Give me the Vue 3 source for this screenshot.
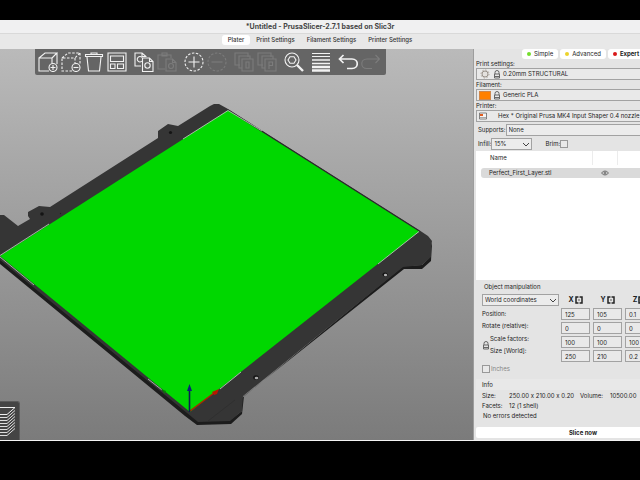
<script setup>
import { ref } from 'vue'

const tabs = ['Plater', 'Print Settings', 'Filament Settings', 'Printer Settings']
const activeTab = ref('Plater')

const modes = [
  { name: 'Simple', tone: 'green' },
  { name: 'Advanced', tone: 'yellow' },
  { name: 'Expert', tone: 'red' },
]
const mode = ref('Expert')

const toolGroups = [
  [{ id: 'add', label: 'Add' }, { id: 'remove', label: 'Delete' }, { id: 'trash', label: 'Delete all' }, { id: 'arrange', label: 'Arrange' }],
  [{ id: 'copy', label: 'Copy' }, { id: 'paste', label: 'Paste', off: true }],
  [{ id: 'plus', label: 'Add instance' }, { id: 'minus', label: 'Remove instance', off: true }],
  [{ id: 'objects', label: 'Split to objects', off: true }, { id: 'parts', label: 'Split to parts', off: true }],
  [{ id: 'search', label: 'Search' }],
  [{ id: 'layers', label: 'Variable layer height' }],
  [{ id: 'undo', label: 'Undo' }, { id: 'redo', label: 'Redo', off: true }],
]

const axes = ['X', 'Y', 'Z']
const values = ref([
  { name: 'Position', v: ['125', '105', '0.1'] },
  { name: 'Rotate', v: ['0', '0', '0'] },
  { name: 'Scale', v: ['100', '100', '100'] },
  { name: 'Size', v: ['250', '210', '0.2'] },
])
const inches = ref(false)
const brim = ref(false)
</script>

<template>
  <div class="screen">
    <div class="window">
      <header class="titlebar">*Untitled - PrusaSlicer-2.7.1 based on Slic3r</header>
      <nav class="tabs">
        <button v-for="t in tabs" :key="t" :class="['tab', { active: t === activeTab }]" @click="activeTab = t">{{ t }}</button>
      </nav>
      <div class="body">
        <main class="canvas">
          <svg class="bed" viewBox="0 49 474 391" preserveAspectRatio="xMinYMin slice" aria-hidden="true">
            <path fill="#1c1c1c" d="M0 258 190 413 230 420 242 411V398L403 266 422 265 431 256V246L432 241V244L431 261 422 269H404L244 396 242 414 231 424 197 425 185 416 0 264Z" />
            <path fill="#353535" d="M0 215H4L18 226 30 219 28 216V212L39 206 50 207 158 138V131L168 124 178 126 210 106 214 104H219L228 109 419 230 428 236 432 241 431 245V257L422 265 403 267 243 396 242 411 230 421 198 422 0 260Z" />
            <path fill="none" stroke="#2a2a2a" stroke-width="1.4" d="M228 110 419 231" />
            <path fill="#00d700" d="M0 256 228 110.500 419 231.500 190 412Z" />
            <path fill="none" stroke="#d8e8d8" stroke-width=".7" d="M0 257 34 285M148 379 162 390M220 389 241 372M378 264 419 231.500 M228 110.500 262 131M183 139 228 110.500M0 255.500 49 224" />
            <circle cx="42" cy="214" r="1.8" fill="#141414" />
            <circle cx="170.500" cy="132.500" r="1.6" fill="#141414" />
            <circle cx="60.500" cy="213.500" r=".7" fill="#202020" />
            <ellipse cx="256" cy="377.500" rx="2.8" ry="2.2" fill="#151515" />
            <ellipse cx="256.500" cy="378" rx="1.8" ry="1.300" fill="#a8a8a8" />
            <ellipse cx="385" cy="274.500" rx="2.600" ry="2" fill="#151515" />
            <ellipse cx="385.500" cy="275" rx="1.600" ry="1.200" fill="#b8b8b8" />
            <path fill="none" stroke="#2c2c2c" stroke-width=".7" d="M208 421 235 400" />
            <path fill="none" stroke="#b41c00" stroke-width="1.300" d="M190 411 214 393" />
            <path fill="#b81800" d="M212 392 219 389 217 394 214 395Z" />
            <path fill="#0a7d08" d="M161 389 166 391 165 394Z" />
            <path fill="none" stroke="#0b2050" stroke-width="1.600" d="M189.500 412V389" />
            <path fill="#0b2078" d="M187 391 189.500 384 192 391Z" />
          </svg>
          <div class="toolbar">
            <div v-for="(g, i) in toolGroups" :key="i" class="group">
              <button v-for="t in g" :key="t.id" class="tool" :disabled="t.off" :aria-label="t.label">
                <svg viewBox="0 0 20 20" aria-hidden="true">
                  <template v-if="t.id === 'add'">
                    <path d="M11 19H1V6H14V11M1 6 7 1H19L14 6M19 1V12" />
                    <circle cx="15" cy="15.500" r="4" /><path d="M15 13V18M12.500 15.500H17.500" />
                  </template>
                  <template v-else-if="t.id === 'remove'">
                    <path class="dash" d="M11 19H1V6H14V11M1 6 7 1H19L14 6M19 1V12" />
                    <circle cx="15" cy="15.500" r="4" /><path d="M12.500 15.500H17.500" />
                  </template>
                  <template v-else-if="t.id === 'trash'">
                    <path d="M3 5 4.500 19H15.500L17 5M1.500 4.500H18.500V2.500H1.500ZM7 2.500V1H13V2.500" />
                  </template>
                  <template v-else-if="t.id === 'arrange'">
                    <path d="M1 1H19V19H1ZM3.500 4H16.500V9.500H3.500ZM3.500 12H8V16.500H3.500ZM10.500 12H16.500V16.500H10.500Z" />
                  </template>
                  <template v-else-if="t.id === 'copy'">
                    <path d="M7 14H1V1H8L12 4.500V5M8 1V4.500H12" /><path d="M8 9A2.700 2.700 0 1 1 8 5.500" />
                    <path d="M8.500 6H15.500L19 9.500V19.500H8.500Z" /><path d="M15.500 6V9.500H19" /><circle cx="13.500" cy="13.500" r="2.700" />
                  </template>
                  <template v-else-if="t.id === 'paste'">
                    <path d="M8 17H1V3H14V6M5 4V1H10V4Z" />
                    <path d="M9 7H15.500L19 10.500V19H9ZM15.500 7V10.500H19" /><circle cx="14" cy="14" r="2.500" />
                  </template>
                  <template v-else-if="t.id === 'plus' || t.id === 'minus'">
                    <circle class="dash" cx="10" cy="10" r="9" />
                    <path :d="t.id === 'plus' ? 'M10 4.500V15.500M4.500 10H15.500' : 'M4.500 10H15.500'" />
                  </template>
                  <template v-else-if="t.id === 'objects' || t.id === 'parts'">
                    <path d="M6 13H1V1H14V5M8 16H5V4H16V7M8 7H19V19H8Z" />
                    <path v-if="t.id === 'objects'" d="M12 10H15V16H12Z" />
                    <path v-else d="M12 17V10H15.500V13.500H12" />
                  </template>
                  <template v-else-if="t.id === 'search'">
                    <circle cx="8" cy="8" r="7" /><path d="M6 4.800H10L12 8 10 11.200H6L4 8Z" />
                    <path class="thick" d="M13 13 19 19" />
                  </template>
                  <template v-else-if="t.id === 'layers'">
                    <path class="w1" d="M1 1.500H19M1 4.500H19" /><path class="w2" d="M1 8H19M1 11.500H19" /><path class="thick" d="M1 15H19M1 18.500H19" />
                  </template>
                  <template v-else-if="t.id === 'undo'">
                    <path class="w2" d="M5.500 3 1.500 7 5.500 11M1.500 7H14C21 7 21 16.500 14 16.500H9" />
                  </template>
                  <template v-else>
                    <path d="M14.500 3 18.500 7 14.500 11M18.500 7H6C-1 7-1 16.500 6 16.500H11" />
                  </template>
                </svg>
              </button>
            </div>
          </div>
          <button class="view" aria-label="Preview layers">
            <svg viewBox="0 0 20 39" aria-hidden="true">
              <path fill="none" stroke="#eee" stroke-width="1" d="M0 5.500H15L7 12.500H0" />
              <path v-for="n in 7" :key="n" fill="none" stroke="#ddd" stroke-width="1" :d="`M0 ${12.5 + n * 3}H7L15 ${5.5 + n * 3}`" />
            </svg>
          </button>
        </main>

        <aside class="side">
          <div class="inner">
            <div class="modes">
              <button v-for="m in modes" :key="m.name" :class="['mode', { active: m.name === mode }]" @click="mode = m.name">
                <i :class="['dot', m.tone]"></i>{{ m.name }}
              </button>
            </div>

            <div class="presets">
              <span class="lbl">Print settings:</span>
              <button class="combo" aria-label="Print settings">
                <svg class="gear" viewBox="0 0 10 10" aria-hidden="true"><circle cx="5" cy="5" r="3" fill="#e4e1de" stroke="#99928b" /><circle cx="5" cy="5" r="4" fill="none" stroke="#aaa098" stroke-width="1" stroke-dasharray="1.500 1.600" /></svg>
                <svg class="lock" viewBox="0 0 8 9" aria-hidden="true"><path d="M2 4V2.500A2 2 0 0 1 6 2.500V4M1.500 4H6.500V8H1.500ZM2 6.500H6" /></svg>
                0.20mm STRUCTURAL
              </button>
              <span class="lbl">Filament:</span>
              <button class="combo" aria-label="Filament">
                <i class="swatch"></i>
                <svg class="lock" viewBox="0 0 8 9" aria-hidden="true"><path d="M2 4V2.500A2 2 0 0 1 6 2.500V4M1.500 4H6.500V8H1.500ZM2 6.500H6" /></svg>
                Generic PLA
              </button>
              <span class="lbl">Printer:</span>
              <button class="combo printer" aria-label="Printer">
                <svg class="machine" viewBox="0 0 8 8" aria-hidden="true"><path fill="#f4f4f4" stroke="#666" stroke-width=".8" d="M.5 1H7.500V7H.5Z" /><path fill="#e05c20" d="M1 2H4V4H1Z" /><path stroke="#777" stroke-width=".6" d="M1 5.500H7" /></svg>
                Hex * Original Prusa MK4 Input Shaper 0.4 nozzle
              </button>
            </div>

            <div class="line supports">
              <label for="supports">Supports:</label>
              <select id="supports" class="pick"><option>None</option></select>
            </div>
            <div class="line infill">
              <label for="infill">Infill:</label>
              <span class="drop density">
                <select id="infill" class="pick"><option>15%</option></select>
                <svg viewBox="0 0 8 5" aria-hidden="true"><path d="M1 1 4 4 7 1" /></svg>
              </span>
              <label class="brim">Brim:<input v-model="brim" type="checkbox" class="box" /></label>
            </div>

            <table class="list">
              <thead><tr><th scope="col">Name</th><th></th><th></th></tr></thead>
              <tbody>
                <tr>
                  <td>Perfect_First_Layer.stl</td>
                  <td class="eye"><svg viewBox="0 0 8 6" aria-hidden="true"><path d="M.5 3Q4-1 7.500 3 4 7 .5 3Z" /><circle cx="4" cy="3" r="1" /></svg></td>
                  <td></td>
                </tr>
              </tbody>
            </table>

            <section class="manip">
              <h2>Object manipulation</h2>
              <div class="fields">
                <div class="left">
                  <span class="drop">
                    <select class="pick" aria-label="Coordinate system"><option>World coordinates</option></select>
                    <svg viewBox="0 0 8 5" aria-hidden="true"><path d="M1 1 4 4 7 1" /></svg>
                  </span>
                  <span class="name">Position:</span>
                  <span class="name">Rotate (relative):</span>
                  <div class="locked">
                    <svg class="lock" viewBox="0 0 8 9" aria-hidden="true"><path d="M2 4V2.500A2 2 0 0 1 6 2.500V4M1.500 4H6.500V8H1.500ZM2 6.500H6" /></svg>
                    <div><span class="name">Scale factors:</span><span class="name">Size [World]:</span></div>
                  </div>
                </div>
                <div class="grid">
                  <div v-for="a in axes" :key="a" class="axis">
                    {{ a }}<svg viewBox="0 0 8 8" aria-hidden="true"><path d="M3 1H1V7H3M5 1H7V7H5" /><path class="thin" d="M3 1H5M3 7H5M4 3V5" /></svg>
                  </div>
                  <template v-for="row in values" :key="row.name">
                    <input v-for="(a, i) in axes" :key="a" v-model="row.v[i]" type="text" :aria-label="`${row.name} ${a}`" />
                  </template>
                </div>
              </div>
              <label class="inches"><input v-model="inches" type="checkbox" class="box" />Inches</label>
            </section>

            <section class="info">
              <h2>Info</h2>
              <dl>
                <dt>Size:</dt><dd>250.00 x 210.00 x 0.20</dd><dt>Volume:</dt><dd>10500.00</dd>
                <dt>Facets:</dt><dd>12 (1 shell)</dd>
              </dl>
              <p>No errors detected</p>
            </section>

            <button class="slice">Slice now</button>
          </div>
        </aside>
      </div>
    </div>
  </div>
</template>

<style>
body { background: #000; }
</style>

<style scoped>
* { box-sizing: border-box; }
.screen { height: 100vh; padding: 20px 0 39px; background: #000; font: 6px/10px Inter, "Liberation Sans", sans-serif; font-feature-settings: "calt" 0; color: #1c1c1c; }
.window { height: 100%; display: flex; flex-direction: column; background: #e4e4e4; border-bottom: 1px solid #f4f4f4; overflow: hidden; }
button, input, select { font: inherit; color: inherit; margin: 0; padding: 0; border: 0; background: none; }
h2, p, dl, dd { margin: 0; font: inherit; }
svg { display: block; flex: none; }

.titlebar { height: 14px; font-size: 7px; line-height: 14px; text-align: center; font-weight: 700; color: #454545; background: #f0f0f1; border-bottom: 1px solid #d9d9d9; flex: none; }
.tabs { height: 15px; flex: none; display: flex; justify-content: center; align-items: flex-start; padding: 1px 0 0; background: #e8e8e8; }
.tab { height: 10px; padding: 0 6px; font-weight: 500; color: #333; border-radius: 3px; white-space: nowrap; }
.tab.active { background: #fff; }

.body { flex: 1; min-height: 0; display: grid; grid-template-columns: minmax(0, 1fr) 166px; }
.canvas { position: relative; overflow: hidden; min-height: 0; background: linear-gradient(#bababa, #7b7b7b); border-right: 1px solid #9d9d9d; }
.bed { position: absolute; inset: 0; width: 100%; height: 100%; }
.toolbar { position: absolute; top: 0; left: 35px; display: flex; gap: 7px; padding: 3px 5px 3px 3px; background: #656565; border-radius: 0 0 2px 2px; }
.group { display: flex; gap: 3px; }
.tool { width: 20px; height: 20px; }
.tool svg { width: 20px; height: 20px; fill: none; stroke: #f2f2f2; stroke-width: 1.1; }
.tool:disabled svg { stroke: #7c7c7c; }
.tool .dash { stroke-dasharray: 2.500 1.500; }
.tool .thick { stroke-width: 2.400; }
.tool .w1 { stroke-width: 1; }
.tool .w2 { stroke-width: 1.700; }
.view { position: absolute; left: 0; bottom: 0; width: 20px; height: 39px; background: #444; border: solid #5a5a5a; border-width: 1px 1px 0 0; border-radius: 0 3px 0 0; overflow: hidden; }
.view svg { width: 20px; height: 39px; }

.side { overflow: hidden; background: #e4e4e4; }
.inner { width: 216px; height: 100%; display: flex; flex-direction: column; padding: 0 0 2px 2px; }
.modes { display: flex; gap: 2px; height: 10px; padding-left: 46px; flex: none; }
.mode { display: flex; align-items: center; gap: 3px; height: 10px; padding: 0 5px; background: #fff; border-radius: 3px; }
.mode.active { font-weight: 700; }
.dot { width: 4px; height: 4px; border-radius: 50%; }
.green { background: #74dd2c; }
.yellow { background: #ecd32a; }
.red { background: #d81818; }
.presets { display: flex; flex-direction: column; flex: none; }
.lbl { height: 9px; line-height: 9px; }
.combo { height: 12px; display: flex; align-items: center; gap: 2px; padding: 0 2px; border: 1px solid #a2a2a2; background: #e9e9e9; text-align: left; white-space: nowrap; }
.gear { width: 10px; height: 10px; margin: 0 1px; }
.lock { width: 8px; height: 9px; fill: none; stroke: #666; stroke-width: 1; }
.swatch { width: 12px; height: 9px; background: #ff8000; border: 1px solid #d0874a; }
.machine { width: 8px; height: 8px; }
.printer { gap: 11px; }
.line { display: flex; align-items: center; flex: none; padding-left: 2px; }
.supports { height: 14px; margin-top: 1px; }
.supports .pick { flex: 1; height: 12px; border: 1px solid #a2a2a2; }
.pick { appearance: none; background: #ececec; padding: 0 2px; border-radius: 0; }
.drop { position: relative; display: flex; }
.drop .pick { width: 100%; height: 12px; border: 1px solid #a2a2a2; }
.drop svg { position: absolute; right: 2px; top: 4px; width: 8px; height: 5px; fill: none; stroke: #444; stroke-width: 1; pointer-events: none; }
.infill { height: 13px; }
.density { width: 41px; }
.brim { display: flex; align-items: center; margin-left: 13px; }
.box { appearance: none; width: 8px; height: 8px; border: 1px solid #999; background: #e9e9e9; }

.list { flex: 1; width: 100%; min-height: 0; margin-top: 1px; background: #fff; border-collapse: separate; border-spacing: 0; table-layout: fixed; display: block; }
.list thead, .list tbody { display: block; }
.list tr { display: grid; grid-template-columns: 112px 25px 1fr; margin-left: 5px; }
.list th { height: 14px; line-height: 14px; padding: 0 0 0 9px; font-weight: 400; text-align: left; border-right: 1px solid #ececec; }
.list tbody { padding-top: 3px; }
.list tbody tr { background: #dadada; border-radius: 3px; }
.list td { padding: 0 0 0 8px; height: 10px; }
.list .eye { display: flex; align-items: center; }
.eye svg { width: 8px; height: 6px; fill: none; stroke: #555; stroke-width: .8; }

.manip { flex: none; padding: 1px 0 5px 6px; }
.manip h2 { height: 12px; line-height: 12px; padding-left: 2px; }
.fields { display: flex; gap: 2px; padding-top: 1px; }
.left { width: 77px; display: flex; flex-direction: column; }
.left .drop { margin-bottom: 2px; }
.name { display: block; height: 12px; line-height: 12px; white-space: nowrap; }
.locked { display: flex; align-items: center; padding-top: 1px; }
.grid { display: grid; grid-template-columns: repeat(3, 29px); grid-auto-rows: 12px; gap: 2px 3px; }
.axis { display: flex; align-items: center; justify-content: center; gap: 1px; font-size: 7px; font-weight: 700; }
.axis svg { width: 8px; height: 8px; fill: none; stroke: #222; stroke-width: 1.500; }
.axis .thin { stroke-width: .7; }
.grid input { width: 100%; height: 12px; padding: 0 3px; border: 1px solid #a2a2a2; background: #e9e9e9; }
.inches { display: flex; align-items: center; gap: 1px; height: 10px; margin-top: 2px; color: #858585; }

.info { flex: none; padding-bottom: 7px; }
.info h2 { height: 11px; line-height: 11px; padding-left: 6px; margin-bottom: 1px; background: #e8e8e8; }
.info dl { display: grid; grid-template-columns: 27px 71px 30px 1fr; padding-left: 6px; white-space: nowrap; }
.info p { padding-left: 7px; line-height: 9px; }
.slice { height: 11px; flex: none; background: #fff; border-radius: 2px; font-weight: 700; }
</style>
